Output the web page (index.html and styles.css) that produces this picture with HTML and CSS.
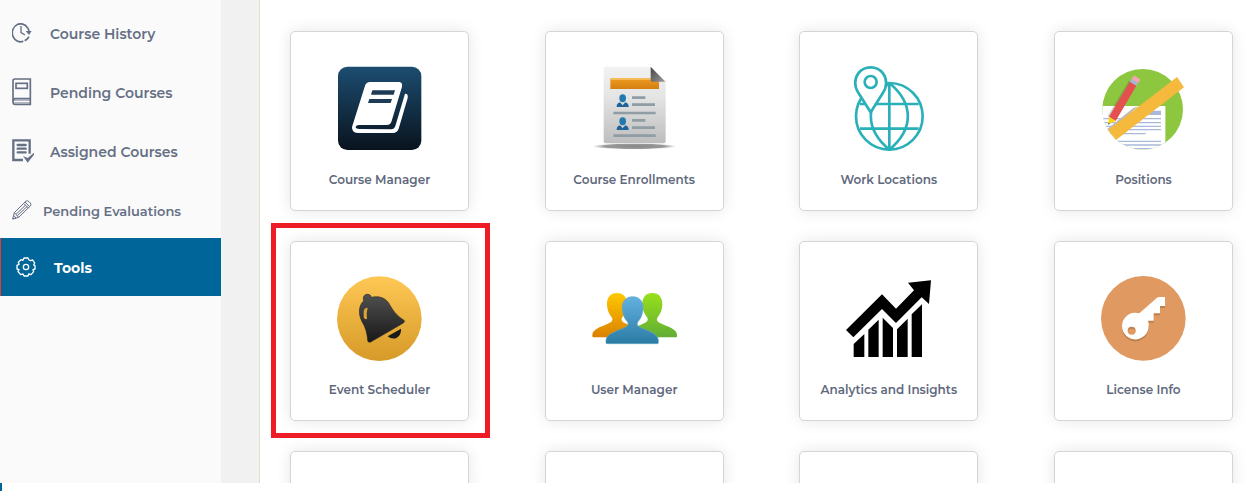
FILE: index.html
```
<!DOCTYPE html>
<html lang="en">
<head>
  <meta charset="UTF-8" />
  <meta name="viewport" content="width=device-width, initial-scale=1.0"/>
  <title>Tools</title>
  <link rel="stylesheet" href="styles.css">
</head>
<body>

  <div class="layout">
    <nav class="sidebar">
      <a href="#history">
        <svg width="20" height="20" viewBox="0 0 60 60" fill="none" stroke="currentColor" stroke-width="5">
          <path d="M47 15A25 27 0 1 0 34 55"/>
          <path d="M38 53Q47 49 51 41"/>
          <path d="M27 9v20l12 7" stroke-width="4"/>
          <path d="M47 15Q51 20 51 26" />
          <path d="M41 24h18l-8 12z" fill="currentColor" stroke="none"/>
        </svg>
        <span>Course History</span>
      </a>
      <a href="#pending">
        <svg width="20" height="28" viewBox="0 0 60 84" fill="none" stroke="currentColor" stroke-width="5">
          <path d="M3 72V9Q3 3 9 3H55V79H9Q3 79 3 71Q3 62 10 62H55"/>
          <path d="M5 67h50M7 74h48" stroke-width="4" opacity=".5"/>
          <rect x="12" y="16" width="34" height="15"/>
        </svg>
        <span>Pending Courses</span>
      </a>
      <a href="#assigned">
        <svg width="23" height="24" viewBox="0 0 69 72" fill="none" stroke="currentColor" stroke-width="7">
          <path d="M33 63H4V4H53V44"/>
          <path d="M17 18h24M17 29h24M17 40h24" stroke-linecap="round"/>
          <path d="M33 51L47 57L66 41V47L47 71Z" fill="currentColor" stroke="none"/>
        </svg>
        <span>Assigned Courses</span>
      </a>
      <a href="#evaluations" class="compact">
        <svg width="20" height="20" viewBox="0 0 60 60" fill="none" stroke="currentColor" stroke-width="3" stroke-linejoin="round">
          <path d="M2 57L7 38L41 4Q46 0 51 5L55 9Q59 14 55 18L20 52Z"/>
          <path d="M7 38L20 52M35 10L49 24M39 6L53 20M12 43L41 15M16 47L46 19M2 57L12 54L6 47"/>
        </svg>
        <span>Pending Evaluations</span>
      </a>
      <a href="#tools" class="active">
        <svg width="20" height="20" viewBox="0 0 60 60" fill="none" stroke="currentColor" stroke-width="4" stroke-linejoin="round">
          <path d="M24 3H36L39 9L44 11L50 9L56 18L53 24L57 26V36L51 38L53 44L45 53L38 51L36 57H24L21 51L14 53L6 44L9 38L3 36V25L9 22L7 16L15 8L21 10Z"/>
          <circle cx="30" cy="30" r="8"/>
        </svg>
        <span>Tools</span>
      </a>
    </nav>

    <main>
      <div class="tools">
        <a class="card" href="#course-manager">
          <svg viewBox="0 0 255 255">
            <defs>
              <linearGradient id="navy" x2="0" y2="1">
                <stop offset="0" stop-color="#1c4d70"/>
                <stop offset="1" stop-color="#09131e"/>
              </linearGradient>
            </defs>
            <rect x="3" y="2" width="250" height="250" rx="28" fill="url(#navy)"/>
            <path d="M99 48H187Q197 49 195 62L163 168Q159 177 150 177H66Q56 178 56 184Q57 189 67 189L163 190Q171 190 175 180L204 83Q214 82 212 96L185 188Q180 201 167 201H62Q44 200 45 183L84 59Q88 48 99 48Z" fill="#fff"/>
            <path d="M106 73H174L170 86H102ZM97 99H165L161 111H93Z" fill="#1e3c55"/>
          </svg>
          <span>Course Manager</span>
        </a>
        <a class="card" href="#course-enrollments">
          <svg viewBox="0 0 255 255">
            <defs>
              <linearGradient id="paper" x2="0" y2="1">
                <stop offset="0" stop-color="#f2f2f2"/>
                <stop offset=".4" stop-color="#e4e4e4"/>
                <stop offset="1" stop-color="#bdbdbd"/>
              </linearGradient>
              <linearGradient id="fold" x2="1" y2="1">
                <stop offset="0" stop-color="#444"/>
                <stop offset="1" stop-color="#999"/>
              </linearGradient>
              <linearGradient id="amber" x2="0" y2="1">
                <stop offset="0" stop-color="#ee9c22"/>
                <stop offset="1" stop-color="#d47f10"/>
              </linearGradient>
              <radialGradient id="ground">
                <stop offset="0" stop-color="#888"/>
                <stop offset=".75" stop-color="#999"/>
                <stop offset="1" stop-color="#ccc" stop-opacity=".3"/>
              </radialGradient>
              <g id="person">
                <ellipse cx="92" cy="97" rx="10" ry="12" fill="#2379ae"/>
                <path d="M74 123Q73 113 84 109L92 118L100 109Q111 113 110 123Z" fill="#1f639a"/>
              </g>
            </defs>
            <ellipse cx="127" cy="241" rx="123" ry="9" fill="url(#ground)"/>
            <path d="M41 2H176L221 46V226Q221 232 215 232H41Q35 232 35 226V8Q35 2 41 2Z" fill="url(#paper)"/>
            <path d="M55 40Q55 36 59 36H197Q201 36 201 40V69H55Z" fill="url(#amber)"/>
            <path d="M57 39H198" stroke="#f8c46b" stroke-width="4"/>
            <path d="M176 2L220 47H181Q176 47 176 42Z" fill="url(#fold)"/>
            <use href="#person"/>
            <use href="#person" y="69"/>
            <path d="M120 95h40M120 116h69M64 141h127M120 163h40M120 185h69M64 209h127" stroke="#8f9da5" stroke-width="8"/>
          </svg>
          <span>Course Enrollments</span>
        </a>
        <a class="card" href="#work-locations">
          <svg viewBox="0 0 255 255" fill="none" stroke="#29b0b9" stroke-width="8">
            <circle cx="130" cy="151" r="100"/>
            <path d="M130 50V251M42 114H218M42 188H218M130 51C56 112 56 190 130 251M130 51C204 112 204 190 130 251"/>
            <path d="M74 139L37 80C24 61 25 38 37 22C55-2 93-2 111 22C123 38 124 61 111 80Z" fill="#fff"/>
            <circle cx="74" cy="48" r="18"/>
          </svg>
          <span>Work Locations</span>
        </a>
        <a class="card" href="#positions">
          <svg viewBox="0 0 255 255">
            <defs>
              <clipPath id="disc"><circle cx="125" cy="130" r="121"/></clipPath>
            </defs>
            <g clip-path="url(#disc)">
              <path d="M0 0H255V255H0Z" fill="#8dc63f"/>
              <path d="M0 120H192V255H0Z" fill="#fff"/>
              <path d="M192 120h3v135h-3z" fill="#b7dc8b"/>
              <path d="M110 134h70v13h-70z" fill="#a9b8dc"/>
              <path d="M0 158h180M0 170h180M0 181h180M0 191h180M0 203h134M0 226h180M0 237h180M0 248h180" stroke="#a9b8dc" stroke-width="4"/>
              <path d="M18 190L96 127L112 120L36 188Z" fill="#bbb"/>
            </g>
            <path d="M20 150L84 44L90 48L28 156Z" fill="#555" opacity=".3"/>
            <path d="M228 33L249 64L45 222L21 192Z" fill="#f5b93e"/>
            <path d="M24 152L87 47L106 59L44 165Z" fill="#e5504f"/>
            <path d="M87 47L92 38L111 51L106 59Z" fill="#aeb1dc"/>
            <path d="M92 38L97 31Q99 28 103 31L116 39Q119 41 117 44L111 51Z" fill="#f3a6b0"/>
            <path d="M24 152L44 165L22 174Z" fill="#ffd800"/>
            <path d="M22 170L27 172L22 177Z" fill="#555"/>
          </svg>
          <span>Positions</span>
        </a>
        <a class="card highlighted" href="#event-scheduler">
          <svg viewBox="0 0 255 255">
            <defs>
              <linearGradient id="gold" x2="0" y2="1">
                <stop offset="0" stop-color="#ffc755"/>
                <stop offset="1" stop-color="#d59a28"/>
              </linearGradient>
              <linearGradient id="coal" x2="0" y2="1">
                <stop offset="0" stop-color="#505050"/>
                <stop offset="1" stop-color="#181818"/>
              </linearGradient>
            </defs>
            <circle cx="127" cy="128" r="127" fill="url(#gold)"/>
            <path d="M80 75C76 60 85 54 92 55C99 55 102 60 103 64C124 59 146 64 158 86C168 104 180 120 200 132Q205 136 199 141L101 198Q94 201 92 194C91 175 86 153 75 137C64 115 64 89 80 75Z" fill="url(#coal)" stroke="#2a2a2a" stroke-width="2"/>
            <path d="M92 95Q82 94 80 106V124Q81 131 90 129Q87 112 92 95Z" fill="#d9a035"/>
            <path d="M152 181L192 158C194 184 170 196 152 181Z" fill="#1c1a16"/>
          </svg>
          <span>Event Scheduler</span>
        </a>
        <a class="card" href="#user-manager">
          <svg viewBox="0 0 255 255">
            <defs>
              <linearGradient id="orange" x2="0" y2="1">
                <stop offset="0" stop-color="#ffc800"/>
                <stop offset="1" stop-color="#db8100"/>
              </linearGradient>
              <linearGradient id="green" x2="0" y2="1">
                <stop offset="0" stop-color="#98e01a"/>
                <stop offset="1" stop-color="#62ad35"/>
              </linearGradient>
              <linearGradient id="blue" x2="0" y2="1">
                <stop offset="0" stop-color="#64b1e0"/>
                <stop offset="1" stop-color="#2a7ba4"/>
              </linearGradient>
              <path id="user" d="M0 0C20 0 31 14 30 36C29 53 23 64 15 74C11 83 16 87 34 95C60 105 74 112 74 126V130Q74 133 71 133H-71Q-74 133-74 130V126C-74 112-60 105-34 95C-16 87-11 83-15 74C-23 64-29 53-30 36C-31 14-20 0 0 0Z"/>
            </defs>
            <use href="#user" x="75" y="51" fill="url(#orange)"/>
            <use href="#user" x="181" y="51" fill="url(#green)"/>
            <path d="M122 62C142 62 155 76 153 99C151 118 146 129 137 138C133 149 138 152 158 160C186 171 199 180 199 194V200Q199 203 196 203H45Q42 203 42 200V194C42 180 56 171 86 160C106 152 111 149 107 138C98 129 93 118 91 99C89 76 102 62 122 62Z" fill="url(#blue)" stroke="#5fa5c6" stroke-width="2"/>
          </svg>
          <span>User Manager</span>
        </a>
        <a class="card" href="#analytics">
          <svg viewBox="0 0 255 255">
            <path d="M0 162L108 55L150 98L204 43L186 20L255 13L249 84L227 64L150 141L108 99L22 184Z"/>
            <path d="M23 204L55 174V243H23ZM67 161L98 131V243H67ZM110 125L141 156V243H110ZM153 160L185 128V243H153ZM197 115L228 85V243H197Z"/>
          </svg>
          <span>Analytics and Insights</span>
        </a>
        <a class="card" href="#license">
          <svg viewBox="0 0 255 255">
            <defs>
              <path id="key" fill-rule="evenodd" d="M115 112L168 65Q171 63 174 63H192V90H177V112H158V134H141Q144 142 143 151A40 40 0 1 1 115 112ZM92 152A12 12 0 1 0 92 176A12 12 0 1 0 92 152Z"/>
            </defs>
            <circle cx="127" cy="127" r="127" fill="#e09a61"/>
            <use href="#key" y="6" fill="#bd814f"/>
            <use href="#key" fill="#fff"/>
          </svg>
          <span>License Info</span>
        </a>
        <a class="card" href="#more-1"></a>
        <a class="card" href="#more-2"></a>
        <a class="card" href="#more-3"></a>
        <a class="card" href="#more-4"></a>
      </div>
    </main>
  </div>

  <footer></footer>

</body>
</html>
```
FILE: styles.css
```
* {
  box-sizing: border-box;
}

:root {
  --text: #667085;
  --card-text: #5f697d;
  --blue: #006699;
  --red: #ee1c25;
}

body {
  margin: 0;
  height: 100vh;
  display: flex;
  flex-direction: column;
  overflow: hidden;
  background-color: #fff;
  color: var(--text);
  font-family: Montserrat, Inter, sans-serif;
}

a {
  color: inherit;
  text-decoration: none;
}

.layout {
  flex: 1;
  min-height: 0;
  display: flex;
  overflow: hidden;
  background-color: #f1f1f1;
}

.sidebar {
  width: 221px;
  flex-shrink: 0;
  padding-top: 4px;
  background-color: #fafafa;
}

.sidebar a {
  display: grid;
  grid-template-columns: 38px 1fr;
  align-items: center;
  height: 59px;
  padding-left: 12px;
  padding-bottom: 2px;
  font-size: 14px;
  font-weight: 600;
}

.sidebar span {
  padding-top: 2px;
}

.sidebar .compact {
  grid-template-columns: 31px 1fr;
  height: 57px;
  padding-bottom: 0;
  font-size: 13px;
}

.sidebar .active {
  height: 58px;
  padding-left: 15px;
  padding-bottom: 0;
  border-left: 1px solid #e8392f;
  background-color: var(--blue);
  color: #fff;
  font-weight: 700;
}

main {
  flex: 1;
  margin-left: 38px;
  padding: 31px 25px 0 30px;
  border-left: 1px solid #d9e3c8;
  background-color: #fff;
}

.tools {
  display: grid;
  grid-template-columns: repeat(4, 179px);
  grid-auto-rows: 180px;
  justify-content: space-between;
  row-gap: 30px;
}

.card {
  position: relative;
  display: flex;
  flex-direction: column;
  align-items: center;
  gap: 20px;
  padding-top: 34px;
  border: 1px solid #d5d5d5;
  border-radius: 5px;
  background-color: #fff;
  box-shadow: 0 0 15px rgba(0, 0, 0, 0.1);
  color: var(--card-text);
  font-size: 12px;
  font-weight: 600;
  line-height: 18px;
}

.card svg {
  width: 85px;
  height: 85px;
}

.highlighted::after {
  content: "";
  position: absolute;
  inset: -19px -22px -18px -20px;
  border: 5px solid var(--red);
}

footer {
  height: 8px;
  border-left: 2px solid var(--blue);
}
```
